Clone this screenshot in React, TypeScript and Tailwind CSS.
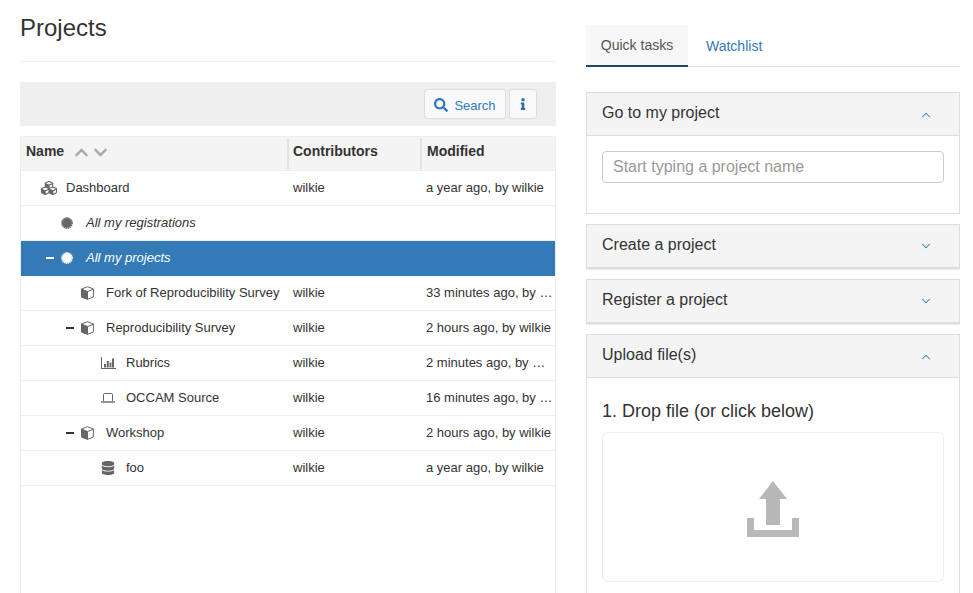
import { ChevronDown, ChevronUp } from "lucide-react";
import { FaChevronDown, FaChevronUp, FaCubes, FaDatabase, FaInfo, FaSearch } from "react-icons/fa";

type Row = {
  name: string;
  icon: "cubes" | "cert" | "cube" | "chart" | "laptop" | "db";
  depth: number;
  who?: string;
  modified?: string;
  open?: boolean;
  selected?: boolean;
  italic?: boolean;
};

const ROWS: Row[] = [
  { name: "Dashboard", icon: "cubes", depth: 0, who: "wilkie", modified: "a year ago, by wilkie" },
  { name: "All my registrations", icon: "cert", depth: 1, italic: true },
  { name: "All my projects", icon: "cert", depth: 1, italic: true, open: true, selected: true },
  { name: "Fork of Reproducibility Survey", icon: "cube", depth: 2, who: "wilkie", modified: "33 minutes ago, by wilkie" },
  { name: "Reproducibility Survey", icon: "cube", depth: 2, open: true, who: "wilkie", modified: "2 hours ago, by wilkie" },
  { name: "Rubrics", icon: "chart", depth: 3, who: "wilkie", modified: "2 minutes ago, by wilkie" },
  { name: "OCCAM Source", icon: "laptop", depth: 3, who: "wilkie", modified: "16 minutes ago, by wilkie" },
  { name: "Workshop", icon: "cube", depth: 2, open: true, who: "wilkie", modified: "2 hours ago, by wilkie" },
  { name: "foo", icon: "db", depth: 3, who: "wilkie", modified: "a year ago, by wilkie" },
];

const INDENT = ["pl-[5px]", "pl-[25px]", "pl-[45px]", "pl-[65px]"];

function LaptopIcon() {
  return (
    <svg width="14" height="12" viewBox="0 0 14 12" className="fill-none stroke-current">
      <path d="M2.5 9V2.5a1 1 0 0 1 1-1h7a1 1 0 0 1 1 1V9" />
      <path d="M0 10h14" strokeWidth="1.4" />
    </svg>
  );
}

function ChartIcon() {
  return (
    <svg width="15" height="12" viewBox="0 0 15 12" className="fill-current">
      <path d="M0 0h1v11h14v1H0z" />
      <path d="M3 7h2v3.5H3zM5.8 4h2v6.5h-2zM8.6 5.5h1.8v5H8.6zM11 1.5h2v9h-2z" />
    </svg>
  );
}

function CubeIcon() {
  return (
    <svg width="13" height="14" viewBox="0 0 13 14" className="fill-none stroke-current">
      <path d="M6.5.7 12.4 3v8L6.5 13.3.6 11V3z" />
      <path d="M.6 3.2 6.5 5.6l5.9-2.4" />
      <path d="M.6 3.4 6.5 5.8v7.4L.6 11z" className="fill-current" />
    </svg>
  );
}

function CertIcon() {
  return (
    <svg width="12" height="12" viewBox="0 0 12 12" className="fill-current stroke-current">
      <circle cx="6" cy="6" r="5" stroke="none" />
      <circle cx="6" cy="6" r="5.4" fill="none" strokeWidth="1.1" strokeDasharray="1.3 0.8" />
    </svg>
  );
}

function RowIcon({ icon }: { icon: Row["icon"] }) {
  if (icon === "cubes") return <FaCubes size={16} />;
  if (icon === "cert") return <CertIcon />;
  if (icon === "cube") return <CubeIcon />;
  if (icon === "chart") return <ChartIcon />;
  if (icon === "laptop") return <LaptopIcon />;
  return <FaDatabase size={14} />;
}

function TreeRow({ row }: { row: Row }) {
  const tone = row.selected ? "bg-[#337ab7] text-white border-[#337ab7]" : "text-[#333] border-[#eee]";
  return (
    <div className={`grid grid-cols-[267px_133px_1fr] h-[35px] border-b items-center text-[13px] ${tone}`}>
      <div className={`flex items-center min-w-0 ${INDENT[row.depth]}`}>
        <span className="w-[15px] flex items-center">{row.open && <span className="block w-2 h-[2px] bg-current" />}</span>
        <span className={`w-[25px] flex items-center ${row.selected ? "text-white" : "text-[#666]"}`}>
          <RowIcon icon={row.icon} />
        </span>
        <span className={`whitespace-nowrap ${row.italic ? "italic" : ""}`}>{row.name}</span>
      </div>
      <div className="pl-[5px]">{row.who}</div>
      <div className="pl-[5px] pr-[1px] truncate">{row.modified}</div>
    </div>
  );
}

function Panel({ title, open, children }: { title: string; open?: boolean; children?: React.ReactNode }) {
  return (
    <section className={`border border-[#ddd] mb-[10px] ${open ? "" : "border-b-2 shadow-[0_1px_1px_#eee]"}`}>
      <header className={`flex items-center justify-between bg-[#f4f4f4] pl-[15px] pr-[26px] text-[16px] text-[#333] ${open ? "h-[43px] border-b border-[#ddd]" : "h-[42px]"}`}>
        <span className="pb-[2px]">{title}</span>
        <span className={`text-[#337ab7] ${open ? "pt-[2px]" : ""}`}>
          {open ? <ChevronUp size={14} strokeWidth={1.8} /> : <ChevronDown size={14} strokeWidth={1.8} />}
        </span>
      </header>
      {children}
    </section>
  );
}

export default function App() {
  return (
    <div className="h-[593px] w-[973px] overflow-hidden bg-white flex gap-[30px] pl-[20px] [font-family:'Liberation_Sans',Arial,sans-serif]">
      {/* Projects tree */}
      <main className="w-[536px] shrink-0 flex flex-col">
        <h1 className="text-[24px] leading-[26px] text-[#333] pt-[15px] pb-[20px] border-b border-[#eee] h-[62px]">Projects</h1>
        <div className="mt-[20px] h-[44px] bg-[#eee] flex items-center justify-end gap-[3px] pr-[19px]">
          <button className="h-[30px] w-[82px] flex items-center justify-center gap-[6px] rounded-[3px] border border-[#ddd] bg-[#f8f9fa] text-[13px] text-[#337ab7]">
            <FaSearch size={14} className="mt-[1px]" />
            <span className="pt-[3px]">Search</span>
          </button>
          <button className="h-[30px] w-[28px] flex items-center justify-center rounded-[3px] border border-[#ddd] bg-[#f8f9fa] text-[#2e6da4]">
            <FaInfo size={12} />
          </button>
        </div>
        <div className="mt-[10px] flex-1 border border-b-0 border-[#eee]">
          <div className="grid grid-cols-[268px_133px_1fr] h-[34px] bg-[#f4f4f4] border-b border-[#eee] text-[14px] font-bold text-[#333]">
            <div className="flex items-center pl-[5px] pb-[5px] border-r-2 border-[#e2e2e2] my-px">
              Name
              <span className="flex items-center gap-[4px] ml-[10px] pt-[3px] text-[#aaa]">
                <FaChevronUp size={15} />
                <FaChevronDown size={15} />
              </span>
            </div>
            <div className="flex items-center pl-[4px] pb-[5px] border-r-2 border-[#e2e2e2] my-px">Contributors</div>
            <div className="flex items-center pl-[5px] pb-[5px]">Modified</div>
          </div>
          {ROWS.map((row) => (
            <TreeRow key={row.name} row={row} />
          ))}
        </div>
      </main>

      {/* Quick tasks */}
      <aside className="w-[374px] shrink-0 pt-[25px]">
        <nav className="flex h-[42px] border-b border-[#ddd] text-[14px]">
          <span className="w-[102px] h-[42px] flex items-center justify-center bg-[#f7f7f7] border-b-2 border-[#1f4766] text-[#555]">Quick tasks</span>
          <span className="ml-[18px] h-[42px] flex items-center text-[#337ab7]">Watchlist</span>
        </nav>
        <div className="mt-[25px]">
          <Panel title="Go to my project" open>
            <div className="px-[15px] pt-[15px] pb-[30px]">
              <input
                placeholder="Start typing a project name"
                className="w-full h-[32px] rounded-[4px] border border-[#ccc] px-[10px] text-[16px] outline-none placeholder:text-[#999]"
              />
            </div>
          </Panel>
          <Panel title="Create a project" />
          <Panel title="Register a project" />
          <Panel title="Upload file(s)" open>
            <div className="px-[15px] pt-[22px] pb-[20px]">
              <h2 className="text-[18px] leading-[22px] text-[#333] mb-[10px]">1. Drop file (or click below)</h2>
              <div className="h-[150px] pt-[4px] rounded-[6px] border border-[#eee] flex items-center justify-center">
                <svg width="52" height="56" viewBox="0 0 52 56" className="fill-[#b8b8b8]">
                  <path d="M26 0 40 18H33V44H19V18H12Z" />
                  <path d="M0 37H7V49H45V37H52V56H0Z" />
                </svg>
              </div>
            </div>
          </Panel>
        </div>
      </aside>
    </div>
  );
}
